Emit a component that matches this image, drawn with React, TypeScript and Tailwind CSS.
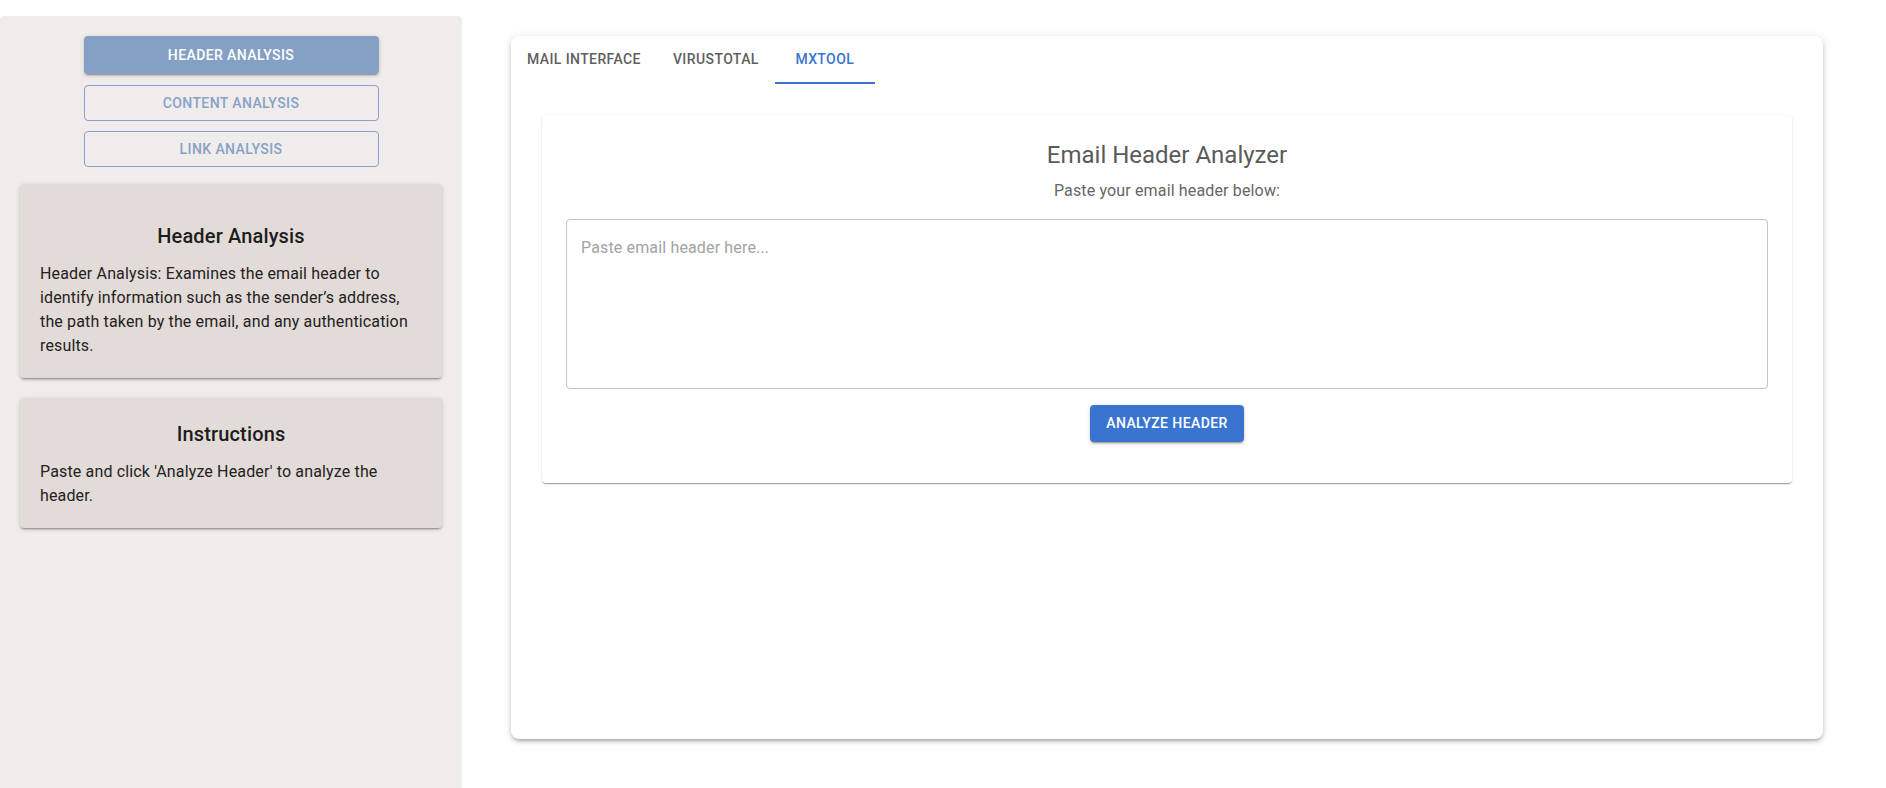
import React, { useState } from 'react';

const tabs = ['Mail Interface', 'VirusTotal', 'MXTool'];

const App: React.FC = () => {
    const [active, setActive] = useState(2);
    const [header, setHeader] = useState('');

    return (
        <div className="flex min-h-[788px] bg-white font-['Roboto','Liberation_Sans',sans-serif]">
            <aside className="mt-4 flex w-[462px] shrink-0 flex-col items-center rounded-t-[4px] bg-[#f1ecec] px-5 pt-5">
                <button className="h-[38px] w-[295px] rounded-[4px] bg-[#84a0c4] text-[14px] font-medium uppercase tracking-[0.4px] text-white shadow-[0_3px_1px_-2px_rgba(0,0,0,0.2),0_2px_2px_0_rgba(0,0,0,0.14),0_1px_5px_0_rgba(0,0,0,0.12)]">
                    Header Analysis
                </button>
                <button className="mt-[11px] h-[36px] w-[295px] rounded-[4px] border border-[#86a2c6] text-[14px] font-medium uppercase tracking-[0.4px] text-[#86a2c6]">
                    Content Analysis
                </button>
                <button className="mt-[10px] h-[36px] w-[295px] rounded-[4px] border border-[#86a2c6] text-[14px] font-medium uppercase tracking-[0.4px] text-[#86a2c6]">
                    Link Analysis
                </button>

                <div className="mt-[17px] w-full rounded-[4px] bg-[#e2dbd8] p-5 shadow-[0_3px_1px_-2px_rgba(0,0,0,0.2),0_2px_2px_0_rgba(0,0,0,0.14),0_1px_5px_0_rgba(0,0,0,0.12)]">
                    <h2 className="mt-4 text-center text-[20px] font-medium leading-8 tracking-[0.15px] text-[#1d1d1d]">Header Analysis</h2>
                    <p className="mt-[10px] text-[16px] leading-6 tracking-[0.15px] text-[#222]">
                        Header Analysis: Examines the email header to identify information such as the sender’s address, the path taken by the email, and any authentication results.
                    </p>
                </div>

                <div className="mt-5 w-full rounded-[4px] bg-[#e2dbd8] p-5 shadow-[0_3px_1px_-2px_rgba(0,0,0,0.2),0_2px_2px_0_rgba(0,0,0,0.14),0_1px_5px_0_rgba(0,0,0,0.12)]">
                    <h2 className="text-center text-[20px] font-medium leading-8 tracking-[0.15px] text-[#1d1d1d]">Instructions</h2>
                    <p className="mt-[10px] text-[16px] leading-6 tracking-[0.15px] text-[#222]">
                        Paste and click 'Analyze Header' to analyze the header.
                    </p>
                </div>
            </aside>

            <main className="flex-1 pl-[49px] pr-[63px] pt-[36px]">
                <div className="h-[703px] rounded-lg bg-white shadow-[0_3px_3px_-2px_rgba(0,0,0,0.2),0_3px_4px_0_rgba(0,0,0,0.14),0_1px_8px_0_rgba(0,0,0,0.12)]">
                    <div className="flex h-12">
                        {tabs.map((t, i) => (
                            <button
                                key={t}
                                onClick={() => setActive(i)}
                                className={`flex h-12 flex-col ${i === 2 ? 'w-[100px]' : 'px-4'}`}
                            >
                                <span
                                    className={`flex h-[46px] w-full items-center justify-center text-[14px] font-medium uppercase tracking-[0.4px] ${
                                        active === i ? 'text-[#3a74d1]' : 'text-[#5f5f5f]'
                                    }`}
                                >
                                    {t}
                                </span>
                                <span className={`h-[2px] w-full ${active === i ? 'bg-[#3a74d1]' : 'bg-transparent'}`}></span>
                            </button>
                        ))}
                    </div>

                    <div className="px-[31px] pt-[31px]">
                        <div className="h-[368px] rounded-[4px] bg-white px-6 pt-[23px] shadow-[0_2px_1px_-1px_rgba(0,0,0,0.2),0_1px_1px_0_rgba(0,0,0,0.14),0_1px_3px_0_rgba(0,0,0,0.12)]">
                            <h1 className="text-center text-[24px] leading-[35px] text-[#5a5a5a]">Email Header Analyzer</h1>
                            <p className="mt-[6px] text-center text-[16px] leading-6 tracking-[0.15px] text-[#666]">Paste your email header below:</p>
                            <textarea
                                value={header}
                                onChange={(e) => setHeader(e.target.value)}
                                placeholder="Paste email header here..."
                                className="mt-4 block h-[170px] w-full resize-none rounded-[4px] border border-[#c4c4c4] px-[14px] pt-[15.5px] pb-[17.5px] text-[16px] leading-[23px] tracking-[0.15px] text-[#222] outline-none placeholder:text-[#a3a3a3]"
                            />
                            <div className="flex justify-center">
                                <button className="mt-4 h-[37px] rounded-[4px] bg-[#3a74d1] px-4 text-[14px] font-medium uppercase tracking-[0.4px] text-white shadow-[0_3px_1px_-2px_rgba(0,0,0,0.2),0_2px_2px_0_rgba(0,0,0,0.14),0_1px_5px_0_rgba(0,0,0,0.12)]">
                                    Analyze Header
                                </button>
                            </div>
                        </div>
                    </div>
                </div>
            </main>
        </div>
    );
};

export default App;
